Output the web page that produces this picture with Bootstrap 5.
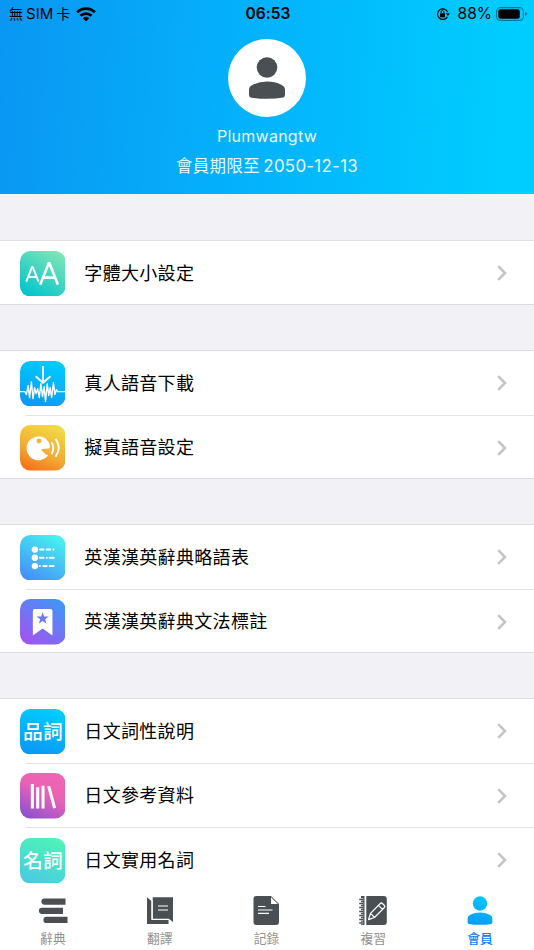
<!DOCTYPE html>
<html lang="zh-Hant">
<head>
<meta charset="utf-8">
<meta name="viewport" content="width=device-width, initial-scale=1">
<title>會員</title>
<link href="https://cdn.jsdelivr.net/npm/bootstrap@5.3.0/dist/css/bootstrap.min.css" rel="stylesheet">
<style>
body{font-family:Inter,"Noto Sans CJK TC",sans-serif;background:#f2f1f6;color:#000}
.screen{height:950px;background:#f2f1f6}
.profile{height:194px;background:linear-gradient(94deg,#0a97f3 0%,#04b1fb 45%,#00cdff 94%)}
.status{height:28px;font-size:15.5px;line-height:28px;padding:0 7px 0 9px}
.status .side{width:180px}
.status .clock{font-size:15.5px;font-weight:600;letter-spacing:.1px}
.status .sim{font-size:15px;word-spacing:-1.2px}
.status .sim i{font-size:14px;font-style:normal}
.status .wifi{margin-left:6px}
.avatar{width:78px;height:78px;margin-top:10.5px}
.who{font-size:16px;line-height:22px;margin-top:8px;letter-spacing:.25px;color:#e9f8ff}
.until{font-size:16.5px;line-height:22px;margin-top:8px;letter-spacing:.28px;word-spacing:-1.5px;color:#e9f8ff}
.until b{font-size:16.9px;font-weight:400}
.settings{padding-top:46px}
.group-box{background:#fff;border-top:1px solid #dddce1;border-bottom:1px solid #dddce1;margin-bottom:45px;border-radius:0}
.entry{height:64.5px;flex:none;padding:0 26px 0 19.5px;font-size:18px;letter-spacing:.33px;border:0;background:transparent;color:#000}
.entry:not(:last-child){background:linear-gradient(#e3e3e5,#e3e3e5) 26px 100%/100% 1px no-repeat}
.group-box.one{height:65px}
.group-box.two{height:129px}
.tile{width:45.5px;height:45.5px;margin-right:19.3px;flex:none}
.tabs{height:66px;background:#fff;font-size:12.8px;line-height:18px;color:#929292}
.tabs a{color:inherit;width:20%;padding-right:1px}
.tabs svg{width:32px;height:32px;margin-top:11px;margin-bottom:3px}
.tabs a.current{color:#127bff;font-weight:500}
svg text{font-family:"Noto Sans CJK TC",sans-serif}
</style>
</head>
<body>
<svg width="0" height="0" class="position-absolute" aria-hidden="true"><defs>
<linearGradient id="g1" x1=".2" y1="1" x2=".8" y2="0"><stop stop-color="#00c4ce"/><stop offset="1" stop-color="#80e5b5"/></linearGradient>
<linearGradient id="g2" x1=".3" y1="1" x2=".6" y2="0"><stop stop-color="#0c98f4"/><stop offset="1" stop-color="#00ccff"/></linearGradient>
<linearGradient id="g3" x1=".2" y1="1" x2=".6" y2="0"><stop stop-color="#f4701a"/><stop offset=".4" stop-color="#f2a832"/><stop offset="1" stop-color="#f2d845"/></linearGradient>
<linearGradient id="g4" x1=".2" y1="1" x2=".75" y2="0"><stop stop-color="#448ff8"/><stop offset="1" stop-color="#46f2ef"/></linearGradient>
<linearGradient id="g5" x1=".1" y1="1" x2=".8" y2="0"><stop stop-color="#a750f0"/><stop offset="1" stop-color="#3e97f8"/></linearGradient>
<linearGradient id="g6" x1=".1" y1="1" x2=".6" y2="0"><stop stop-color="#8650d4"/><stop offset=".65" stop-color="#ea62b6"/><stop offset="1" stop-color="#ef65b4"/></linearGradient>
<linearGradient id="g7" x1=".3" y1="1" x2=".7" y2="0"><stop stop-color="#4acbe2"/><stop offset="1" stop-color="#4df3b7"/></linearGradient>
<linearGradient id="g8" gradientUnits="userSpaceOnUse" x1="12" y1="30" x2="18" y2="1"><stop stop-color="#0c9cf5"/><stop offset="1" stop-color="#00c8ff"/></linearGradient>
<symbol id="chev" viewBox="0 0 12 18"><path d="M2.2 2.2 9 9l-6.8 6.800" fill="none" stroke="#c4c4c6" stroke-width="2.500"/></symbol>
</defs></svg>

<div class="screen d-flex flex-column overflow-hidden">
<header class="profile flex-shrink-0 d-flex flex-column align-items-center">
  <div class="status d-flex align-items-center justify-content-between w-100">
    <div class="side d-flex align-items-center"><span class="sim"><i>無</i> SIM <i>卡</i></span>
      <svg class="wifi" width="20" height="15" viewBox="0 0 20 15"><g fill="none" stroke="#000" stroke-width="2.800"><path d="M1.200 5.300a12.600 12.600 0 0 1 17.600 0"/><path d="M4.500 8.800a7.900 7.900 0 0 1 11 0"/></g><path d="M6.800 11.200a4.700 4.700 0 0 1 6.400 0L10 14.400z"/></svg></div>
    <span class="clock">06:53</span>
    <div class="side d-flex align-items-center justify-content-end">
      <svg width="14" height="14" viewBox="0 0 14 14" class="me-1"><path d="M11.400 9.900A5.300 5.300 0 1 1 11.700 5" fill="none" stroke="#000" stroke-width="1.200"/><path d="M9.800 6.200h4L11.900 9z"/><rect x="4" y="6.200" width="5" height="4" rx=".5"/><path d="M5.100 6.300V5a1.400 1.400 0 0 1 2.800 0v1.300" fill="none" stroke="#000" stroke-width="1"/></svg>
      <span class="ms-1">88%</span>
      <svg width="31" height="14" viewBox="0 0 31 14" class="ms-1"><rect x=".6" y=".6" width="26.800" height="12.800" rx="3.800" fill="none" stroke="#04779a" stroke-width="1.100"/><rect x="2.300" y="2.300" width="21.500" height="9.400" rx="2.200"/><path d="M29 4.700q2 .7 2 2.300t-2 2.300z" fill="#04779a"/></svg>
    </div>
  </div>
  <svg class="avatar" viewBox="0 0 78 78"><circle cx="39" cy="39" r="39" fill="#fff"/><g fill="#4a4f53"><circle cx="39" cy="28.500" r="10.300"/><path d="M21 51q0-3.600 3.800-5.200 6-3.300 14.200-3.300t14.200 3.300Q57 47.400 57 51v5q0 1.900-1.600 2.400Q48 59.800 39 59.800t-16.400-1.400Q21 57.900 21 56z"/></g></svg>
  <div class="who">Plumwangtw</div>
  <div class="until">會員期限至 <b>2050-12-13</b></div>
</header>

<main class="settings flex-grow-1 overflow-hidden">
  <section class="group-box one list-group">
    <div class="entry list-group-item d-flex align-items-center"><svg class="tile" viewBox="0 0 46 46"><rect width="46" height="46" rx="10.500" fill="url(#g1)"/><g fill="none" stroke="#fff" stroke-linejoin="round"><path d="m6.300 31 5.800-14.800h.8L18.700 31M8.300 26.200h8.400" stroke-width="2"/><path d="m20.500 34 8.400-21.500h1L38.300 34M23.400 27h12" stroke-width="2.700"/></g></svg><span class="flex-grow-1">字體大小設定</span><svg width="12" height="18"><use href="#chev"/></svg></div>
  </section>
  <section class="group-box two list-group">
    <div class="entry list-group-item d-flex align-items-center"><svg class="tile" viewBox="0 0 46 46"><rect width="46" height="46" rx="10.500" fill="url(#g2)"/><g fill="none" stroke="#fff" stroke-linejoin="round"><path d="M23.300 5v16M15.800 15.500l7.500 6.500 7.500-6.500" stroke-width="1.900"/><path d="M0 31h5l1.500 3L8.200 25l1.500 12L11.500 21l1.700 17 1.500-11 1.600 6 1.500-5 1.700 9 1.600-14 1.700 13 1.600-10 1.400 15 1.700-18 1.500 12 1.500-8 1.500 10 1.800-15 1.500 12 1.500-5 1.500 2H46" stroke-width="1.400"/></g></svg><span class="flex-grow-1">真人語音下載</span><svg width="12" height="18"><use href="#chev"/></svg></div>
    <div class="entry list-group-item d-flex align-items-center"><svg class="tile" viewBox="0 0 46 46"><rect width="46" height="46" rx="10.500" fill="url(#g3)"/><path fill="#fff" d="M28.700 17A12 12 0 1 0 28.500 30.500Q25.600 30 23.800 27.500 21.500 25.500 22 24.200l7.700-.5q1.300-2.500-1-6.700z"/><circle cx="19.200" cy="16.200" r="2.500" fill="#efb83b"/><g fill="none" stroke="#fff" stroke-width="1.900"><path d="M31.800 17.500q3.700 5.500 0 12M36 14.200q6.300 8.500 0 17.800"/></g></svg><span class="flex-grow-1">擬真語音設定</span><svg width="12" height="18"><use href="#chev"/></svg></div>
  </section>
  <section class="group-box two list-group">
    <div class="entry list-group-item d-flex align-items-center"><svg class="tile" viewBox="0 0 46 46"><rect width="46" height="46" rx="10.500" fill="url(#g4)"/><g fill="#fff"><circle cx="15" cy="14.700" r="3.200"/><circle cx="15" cy="23" r="3.200"/><circle cx="15" cy="31.400" r="3.200"/></g><path d="M20 14.700h3.800M27 14.700h3.500M33.800 14.700h.1M20 23h3.800M27 23h.1M30 23h4M20 31.400h.1M23.500 31.400h3.500M30 31.400h4" stroke="#fff" stroke-width="2" stroke-linecap="round"/></svg><span class="flex-grow-1">英漢漢英辭典略語表</span><svg width="12" height="18"><use href="#chev"/></svg></div>
    <div class="entry list-group-item d-flex align-items-center"><svg class="tile" viewBox="0 0 46 46"><rect width="46" height="46" rx="10.500" fill="url(#g5)"/><path d="M13 12q0-2 2-2h15.800q2 0 2 2v25l-9.900-7.300L13 37z" fill="#fff"/><path d="m22.900 13.300 1.500 4.400h4.700L25.400 20.500l1.400 4.600-3.900-2.800-3.900 2.800 1.400-4.600-3.700-2.800h4.700z" fill="#6c7bf5"/></svg><span class="flex-grow-1">英漢漢英辭典文法標註</span><svg width="12" height="18"><use href="#chev"/></svg></div>
  </section>
  <section class="group-box list-group">
    <div class="entry list-group-item d-flex align-items-center"><svg class="tile" viewBox="0 0 46 46"><rect width="46" height="46" rx="10.500" fill="url(#g2)"/><text x="3" y="30.300" font-size="20" font-weight="500" fill="#fff">品詞</text></svg><span class="flex-grow-1">日文詞性說明</span><svg width="12" height="18"><use href="#chev"/></svg></div>
    <div class="entry list-group-item d-flex align-items-center"><svg class="tile" viewBox="0 0 46 46"><rect width="46" height="46" rx="10.500" fill="url(#g6)"/><path d="M12.500 11v25M17.900 14.500V36M23.300 13v23M29 13.300l6 22.200" fill="none" stroke="#fff" stroke-width="3.100"/></svg><span class="flex-grow-1">日文參考資料</span><svg width="12" height="18"><use href="#chev"/></svg></div>
    <div class="entry list-group-item d-flex align-items-center"><svg class="tile" viewBox="0 0 46 46"><rect width="46" height="46" rx="10.500" fill="url(#g7)"/><text x="3" y="30.300" font-size="20" font-weight="500" fill="#fff">名詞</text></svg><span class="flex-grow-1">日文實用名詞</span><svg width="12" height="18"><use href="#chev"/></svg></div>
  </section>
</main>

<nav class="tabs flex-shrink-0 d-flex">
  <a class="d-flex flex-column align-items-center text-decoration-none" href="#"><svg viewBox="0 0 32 32"><g fill="#4a4f53"><path d="M7.500 3.500h21v6.200h-21a3.100 3.100 0 0 1 0-6.200zM5 12.700h21v6.200H5a3.100 3.100 0 0 1 0-6.200zM9.500 21.800h21V28h-21a3.100 3.100 0 0 1 0-6.200z"/></g></svg>辭典</a>
  <a class="d-flex flex-column align-items-center text-decoration-none" href="#"><svg viewBox="0 0 32 32"><g fill="#4a4f53"><path d="M3 2.200 7.500 6v18.500h17V29H3z"/><path d="M8.700 2.200H29V27l-3.500-2.700H8.700z"/></g><path d="M8.100 5v19.400h16.700" fill="none" stroke="#fff" stroke-width="1.200"/><path d="M14 11h10M14 15h10" stroke="#fff" stroke-width="1.200"/></svg>翻譯</a>
  <a class="d-flex flex-column align-items-center text-decoration-none" href="#"><svg viewBox="0 0 32 32"><path d="M6.500 1H21l8 8v18q0 3-3 3H6.500q-3 0-3-3V4q0-3 3-3z" fill="#4a4f53"/><path d="M21 2.300V9h6.800z" fill="#fff"/><path d="M8 11.500h7.500M8 15h14.500M8 18.400h11" stroke="#fff" stroke-width="1.200"/></svg>記錄</a>
  <a class="d-flex flex-column align-items-center text-decoration-none" href="#"><svg viewBox="0 0 32 32"><g fill="#4a4f53"><path d="M4 1h3.500v29H4zM9.300 1h17.500q3 0 3 3v23q0 3-3 3H9.300z"/></g><path d="M2.200 4.500h4M2.200 8.500h4M2.200 12.500h4M2.200 16.500h4M2.200 20.500h4M2.200 24.500h4M2.200 28h4" stroke="#fff" stroke-width="2.700"/><path d="M2.200 4.500h4M2.200 8.500h4M2.200 12.500h4M2.200 16.500h4M2.200 20.500h4M2.200 24.500h4M2.200 28h4" stroke="#4a4f53" stroke-width="1.700"/><g fill="none" stroke="#fff" stroke-width="1.200" stroke-linejoin="round"><path d="m11.500 24.600 2-6.200L23.300 8.500q1-1 2.100 0l2 2q1 1 0 2L17.500 22.500zM13.500 18.400l4 4M21.500 10.300l4 4"/></g></svg>複習</a>
  <a class="current d-flex flex-column align-items-center text-decoration-none" href="#"><svg viewBox="0 0 32 32"><g fill="url(#g8)"><circle cx="16" cy="8.500" r="7.200"/><path d="M3.600 23.500q0-2.400 2.700-3.700Q10.500 17.500 16 17.500t9.700 2.300q2.700 1.300 2.700 3.700v3.700q0 1.300-1.200 1.700-4.700.9-11.200.9t-11.200-.9q-1.200-.4-1.200-1.700z"/></g></svg>會員</a>
</nav>
</div>
<script src="https://cdn.jsdelivr.net/npm/bootstrap@5.3.0/dist/js/bootstrap.bundle.min.js"></script>
</body>
</html>
